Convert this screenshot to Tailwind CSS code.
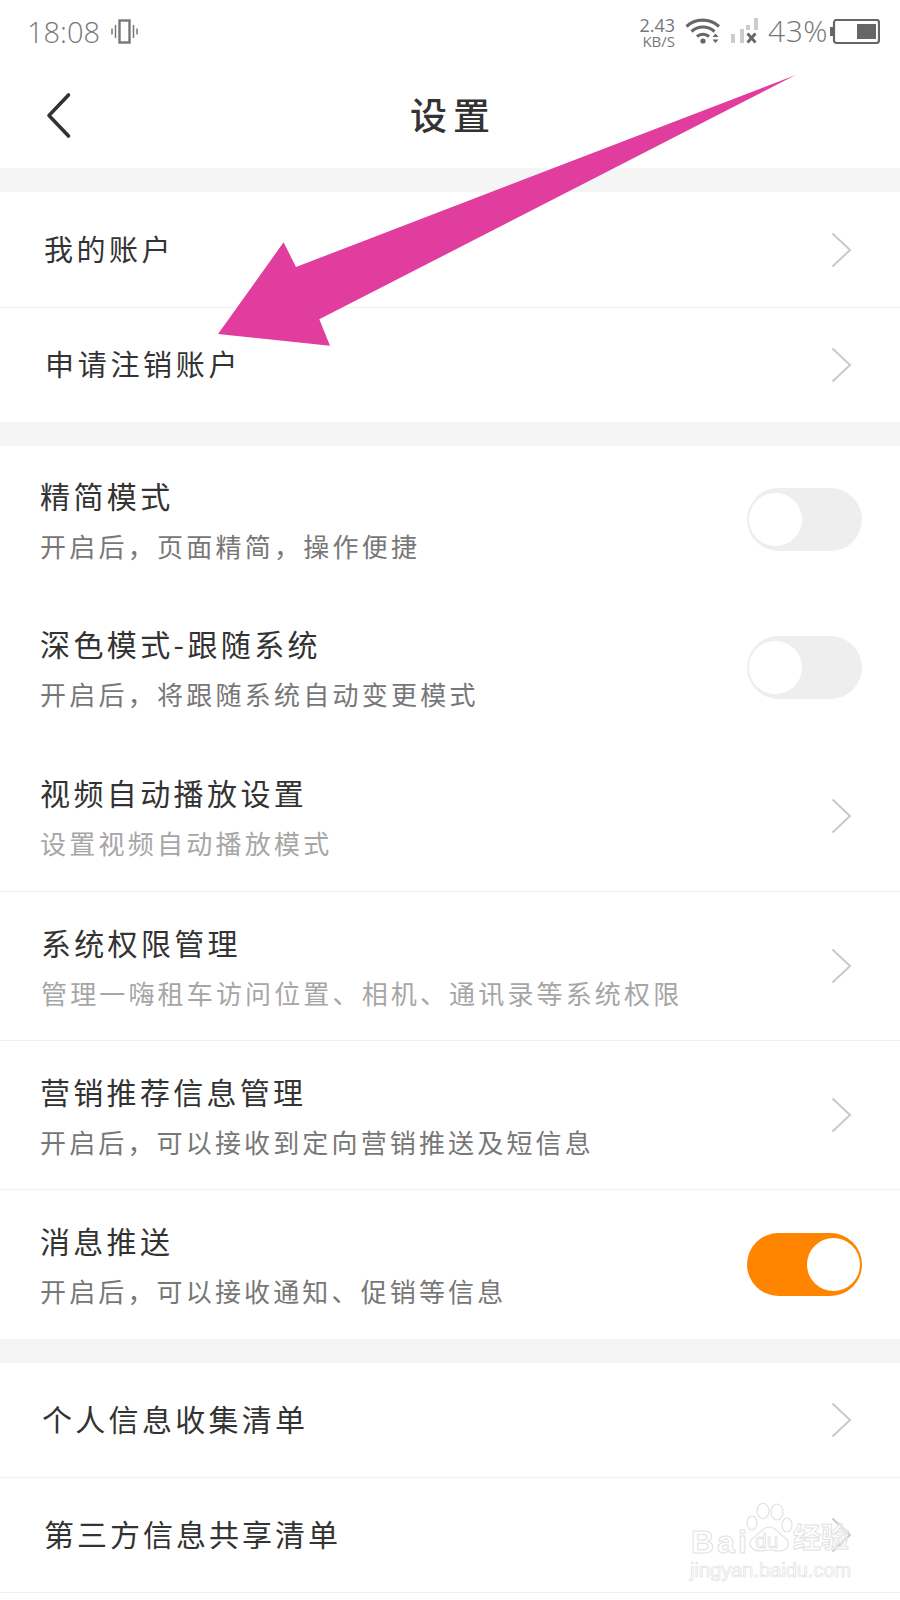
<!DOCTYPE html>
<html lang="zh-CN">

<head>
    <meta charset="UTF-8">
    <meta name="viewport" content="width=device-width, initial-scale=1.0">
    <title>设置</title>
    <script src="https://cdn.jsdelivr.net/npm/@tailwindcss/browser@4"></script>
</head>

<body class="bg-white font-['Noto_Sans_CJK_SC','Liberation_Sans',sans-serif] text-[#333]">
    <div class="relative w-[900px] h-[1600px] overflow-hidden bg-white">
        <!-- Status bar -->
        <div class="h-[62px] flex items-center pl-[27px] pr-[20px] text-[#777] font-['Open_Sans',sans-serif]">
            <span class="text-[29px] leading-none font-light">18:08</span>
            <svg class="ml-[11px] w-[27px] h-[25px]" viewBox="0 0 27 25" fill="none" stroke="#777">
                <rect x="8.500" y="1.500" width="10" height="22" stroke-width="2.400" />
                <path d="M4.500 6v13M1 9.500v6M22.500 6v13M26 9.500v6" stroke-width="1.500" />
            </svg>
            <div class="ml-auto flex flex-col items-end leading-none pt-[2px]">
                <span class="text-[18px] leading-[18px]">2.43</span>
                <span class="text-[15px] leading-[15px]">KB/S</span>
            </div>
            <svg class="ml-[10px] w-[37px] h-[26px]" viewBox="0 0 37 26" fill="none" stroke="#666" stroke-width="3.200">
                <path d="M1.500 8.500C10 0 25 0 34 8.500M6.500 13.500C13 7.500 23 7.500 29.500 13.500M12 18.500C15.500 15.500 20.500 15.500 24 18.500" />
                <circle cx="18" cy="23" r="2.600" fill="#666" stroke="none" />
                <path d="M30.500 15.500l3 3.500h-6zM30.500 25l3-3.500h-6z" fill="#666" stroke="none" />
            </svg>
            <svg class="ml-[9px] w-[28px] h-[26px]" viewBox="0 0 28 26">
                <rect x="0" y="16" width="4" height="9" fill="#ccc" />
                <rect x="9" y="11" width="4" height="14" fill="#ccc" />
                <rect x="15" y="7" width="4" height="5" fill="#ccc" />
                <rect x="23" y="0" width="4" height="12" fill="#ccc" />
                <path d="M16.500 15.500l8 9M24.500 15.500l-8 9" stroke="#666" stroke-width="2.800" fill="none" />
            </svg>
            <span class="ml-[9px] text-[30px] leading-none font-light tracking-[0.5px]">43%</span>
            <svg class="ml-[2px] w-[50px] h-[25px]" viewBox="0 0 50 25">
                <rect x="0" y="8" width="3" height="9" fill="#666" />
                <rect x="4" y="1" width="45" height="23" rx="2.500" fill="none" stroke="#666" stroke-width="2.200" />
                <rect x="27" y="5" width="19" height="15" fill="#666" />
            </svg>
        </div>

        <!-- Title bar -->
        <div class="relative h-[106px] flex items-center justify-center">
            <svg class="absolute left-[45px] top-[30px] w-[27px] h-[47px]" viewBox="0 0 27 47" fill="none" stroke="#333" stroke-width="3.600" stroke-linecap="round" stroke-linejoin="round">
                <path d="M23.500 3 4 23.500 23.500 44" />
            </svg>
            <h1 class="text-[37px] leading-none font-medium tracking-[6px] text-[#333] pl-[6px] pb-[2px]">设置</h1>
        </div>
        <div class="h-[24px] bg-[#f5f5f5]"></div>

        <!-- Account -->
        <div class="h-[116px] flex items-center justify-between pl-[44px] pr-[48px] border-b border-[#f1f1f1]">
            <span class="text-[29px] tracking-[3.500px] pb-[2px]">我的账户</span>
            <svg class="w-[21px] h-[36px]" viewBox="0 0 21 36" fill="none" stroke="#c9c9c9" stroke-width="2">
                <path d="M1.500 1.500 19 18 1.500 34.500" />
            </svg>
        </div>
        <div class="h-[114px] flex items-center justify-between pl-[45px] pr-[48px]">
            <span class="text-[29px] tracking-[3.700px] pb-[2px]">申请注销账户</span>
            <svg class="w-[21px] h-[36px]" viewBox="0 0 21 36" fill="none" stroke="#c9c9c9" stroke-width="2">
                <path d="M1.500 1.500 19 18 1.500 34.500" />
            </svg>
        </div>
        <div class="h-[24px] bg-[#f5f5f5]"></div>

        <!-- Preferences -->
        <div class="h-[147px] flex items-center justify-between pl-[40px] pr-[38px]">
            <div class="flex flex-col gap-[13px]">
                <span class="text-[30px] leading-[40px] tracking-[3.400px]">精简模式</span>
                <span class="text-[26px] leading-[36px] tracking-[3.250px] text-[#777]">开启后，页面精简，操作便捷</span>
            </div>
            <div class="w-[115px] h-[63px] rounded-full bg-[#eeeeee] px-[2px] flex items-center justify-start">
                <div class="w-[53px] h-[53px] rounded-full bg-white"></div>
            </div>
        </div>
        <div class="h-[148px] flex items-center justify-between pl-[40px] pr-[38px]">
            <div class="flex flex-col gap-[13px]">
                <span class="text-[30px] leading-[40px] tracking-[3.400px]">深色模式-跟随系统</span>
                <span class="text-[26px] leading-[36px] tracking-[3.250px] text-[#777]">开启后，将跟随系统自动变更模式</span>
            </div>
            <div class="w-[115px] h-[63px] rounded-full bg-[#eeeeee] px-[2px] flex items-center justify-start">
                <div class="w-[53px] h-[53px] rounded-full bg-white"></div>
            </div>
        </div>
        <div class="h-[151px] flex items-center justify-between pl-[40px] pr-[48px] border-b border-[#f1f1f1]">
            <div class="flex flex-col gap-[13px]">
                <span class="text-[30px] leading-[40px] tracking-[3.400px]">视频自动播放设置</span>
                <span class="text-[26px] leading-[36px] tracking-[3.250px] text-[#a6a6a6]">设置视频自动播放模式</span>
            </div>
            <svg class="w-[21px] h-[36px]" viewBox="0 0 21 36" fill="none" stroke="#c9c9c9" stroke-width="2">
                <path d="M1.500 1.500 19 18 1.500 34.500" />
            </svg>
        </div>
        <div class="h-[149px] flex items-center justify-between pl-[41px] pr-[48px] border-b border-[#f1f1f1]">
            <div class="flex flex-col gap-[13px]">
                <span class="text-[30px] leading-[40px] tracking-[3.300px]">系统权限管理</span>
                <span class="text-[26px] leading-[36px] tracking-[3.150px] text-[#a6a6a6]">管理一嗨租车访问位置、相机、通讯录等系统权限</span>
            </div>
            <svg class="w-[21px] h-[36px]" viewBox="0 0 21 36" fill="none" stroke="#c9c9c9" stroke-width="2">
                <path d="M1.500 1.500 19 18 1.500 34.500" />
            </svg>
        </div>
        <div class="h-[149px] flex items-center justify-between pl-[40px] pr-[48px] border-b border-[#f1f1f1]">
            <div class="flex flex-col gap-[13px]">
                <span class="text-[30px] leading-[40px] tracking-[3.300px]">营销推荐信息管理</span>
                <span class="text-[26px] leading-[36px] tracking-[3.150px] text-[#777]">开启后，可以接收到定向营销推送及短信息</span>
            </div>
            <svg class="w-[21px] h-[36px]" viewBox="0 0 21 36" fill="none" stroke="#c9c9c9" stroke-width="2">
                <path d="M1.500 1.500 19 18 1.500 34.500" />
            </svg>
        </div>
        <div class="h-[149px] flex items-center justify-between pl-[40px] pr-[38px]">
            <div class="flex flex-col gap-[13px]">
                <span class="text-[30px] leading-[40px] tracking-[3.300px]">消息推送</span>
                <span class="text-[26px] leading-[36px] tracking-[3.150px] text-[#777]">开启后，可以接收通知、促销等信息</span>
            </div>
            <div class="w-[115px] h-[63px] rounded-full bg-[#ff8400] px-[2px] flex items-center justify-end">
                <div class="w-[53px] h-[53px] rounded-full bg-white"></div>
            </div>
        </div>
        <div class="h-[24px] bg-[#f5f5f5]"></div>

        <!-- Privacy lists -->
        <div class="h-[115px] flex items-center justify-between pl-[42px] pr-[48px] border-b border-[#f1f1f1]">
            <span class="text-[30px] tracking-[3.300px] pb-[3px]">个人信息收集清单</span>
            <svg class="w-[21px] h-[36px]" viewBox="0 0 21 36" fill="none" stroke="#c9c9c9" stroke-width="2">
                <path d="M1.500 1.500 19 18 1.500 34.500" />
            </svg>
        </div>
        <div class="h-[115px] flex items-center justify-between pl-[44px] pr-[48px] border-b border-[#f1f1f1]">
            <span class="text-[30px] tracking-[3px] pb-[3px]">第三方信息共享清单</span>
            <svg class="w-[21px] h-[36px]" viewBox="0 0 21 36" fill="none" stroke="#c9c9c9" stroke-width="2">
                <path d="M1.500 1.500 19 18 1.500 34.500" />
            </svg>
        </div>

        <!-- Annotation arrow drawn over the screenshot -->
        <svg class="absolute left-0 top-0 w-[900px] h-[400px] pointer-events-none" viewBox="0 0 900 400">
            <polygon points="795.700,75 296,267 283.600,242.300 218,334 330,345.700 319.300,319.300" fill="#e03d9e" />
        </svg>

        <!-- Watermark -->
        <div class="absolute left-[688px] top-[1500px] w-[170px] h-[90px] pointer-events-none">
            <svg class="absolute left-[58px] top-[3px] w-[47px] h-[49px]" viewBox="0 0 47 49" fill="white" fill-opacity="0.7" stroke="#e2e2e2" stroke-width="1.200">
                <ellipse cx="6" cy="20" rx="5" ry="7" />
                <ellipse cx="17" cy="8" rx="6" ry="7.500" />
                <ellipse cx="31" cy="9" rx="6" ry="8" />
                <ellipse cx="41" cy="22" rx="5" ry="7" />
                <path d="M23 24c7 0 9 6 15 10 8 6 4 14-5 14-4 0-6-1-9-1s-6 1-10 1C5 48 1 40 7 35c7-4 9-11 16-11z" />
            </svg>
            <div class="absolute left-[3px] top-[26px] text-[32px] leading-none tracking-[3px] font-['Liberation_Sans',sans-serif] font-bold text-white/50 [-webkit-text-stroke:1px_#e2e2e2]">Bai</div>
            <div class="absolute left-[67px] top-[30px] text-[21px] leading-none font-['Liberation_Sans',sans-serif] text-white/50 [-webkit-text-stroke:0.8px_#e2e2e2]">du</div>
            <div class="absolute left-[105px] top-[22px] text-[28px] leading-none font-bold text-white/50 [-webkit-text-stroke:1px_#e2e2e2]">经验</div>
            <div class="absolute left-[2px] top-[60px] text-[20px] leading-none font-['Liberation_Sans',sans-serif] text-white/50 [-webkit-text-stroke:0.7px_#e2e2e2]">jingyan.baidu.com</div>
        </div>
    </div>
</body>

</html>
